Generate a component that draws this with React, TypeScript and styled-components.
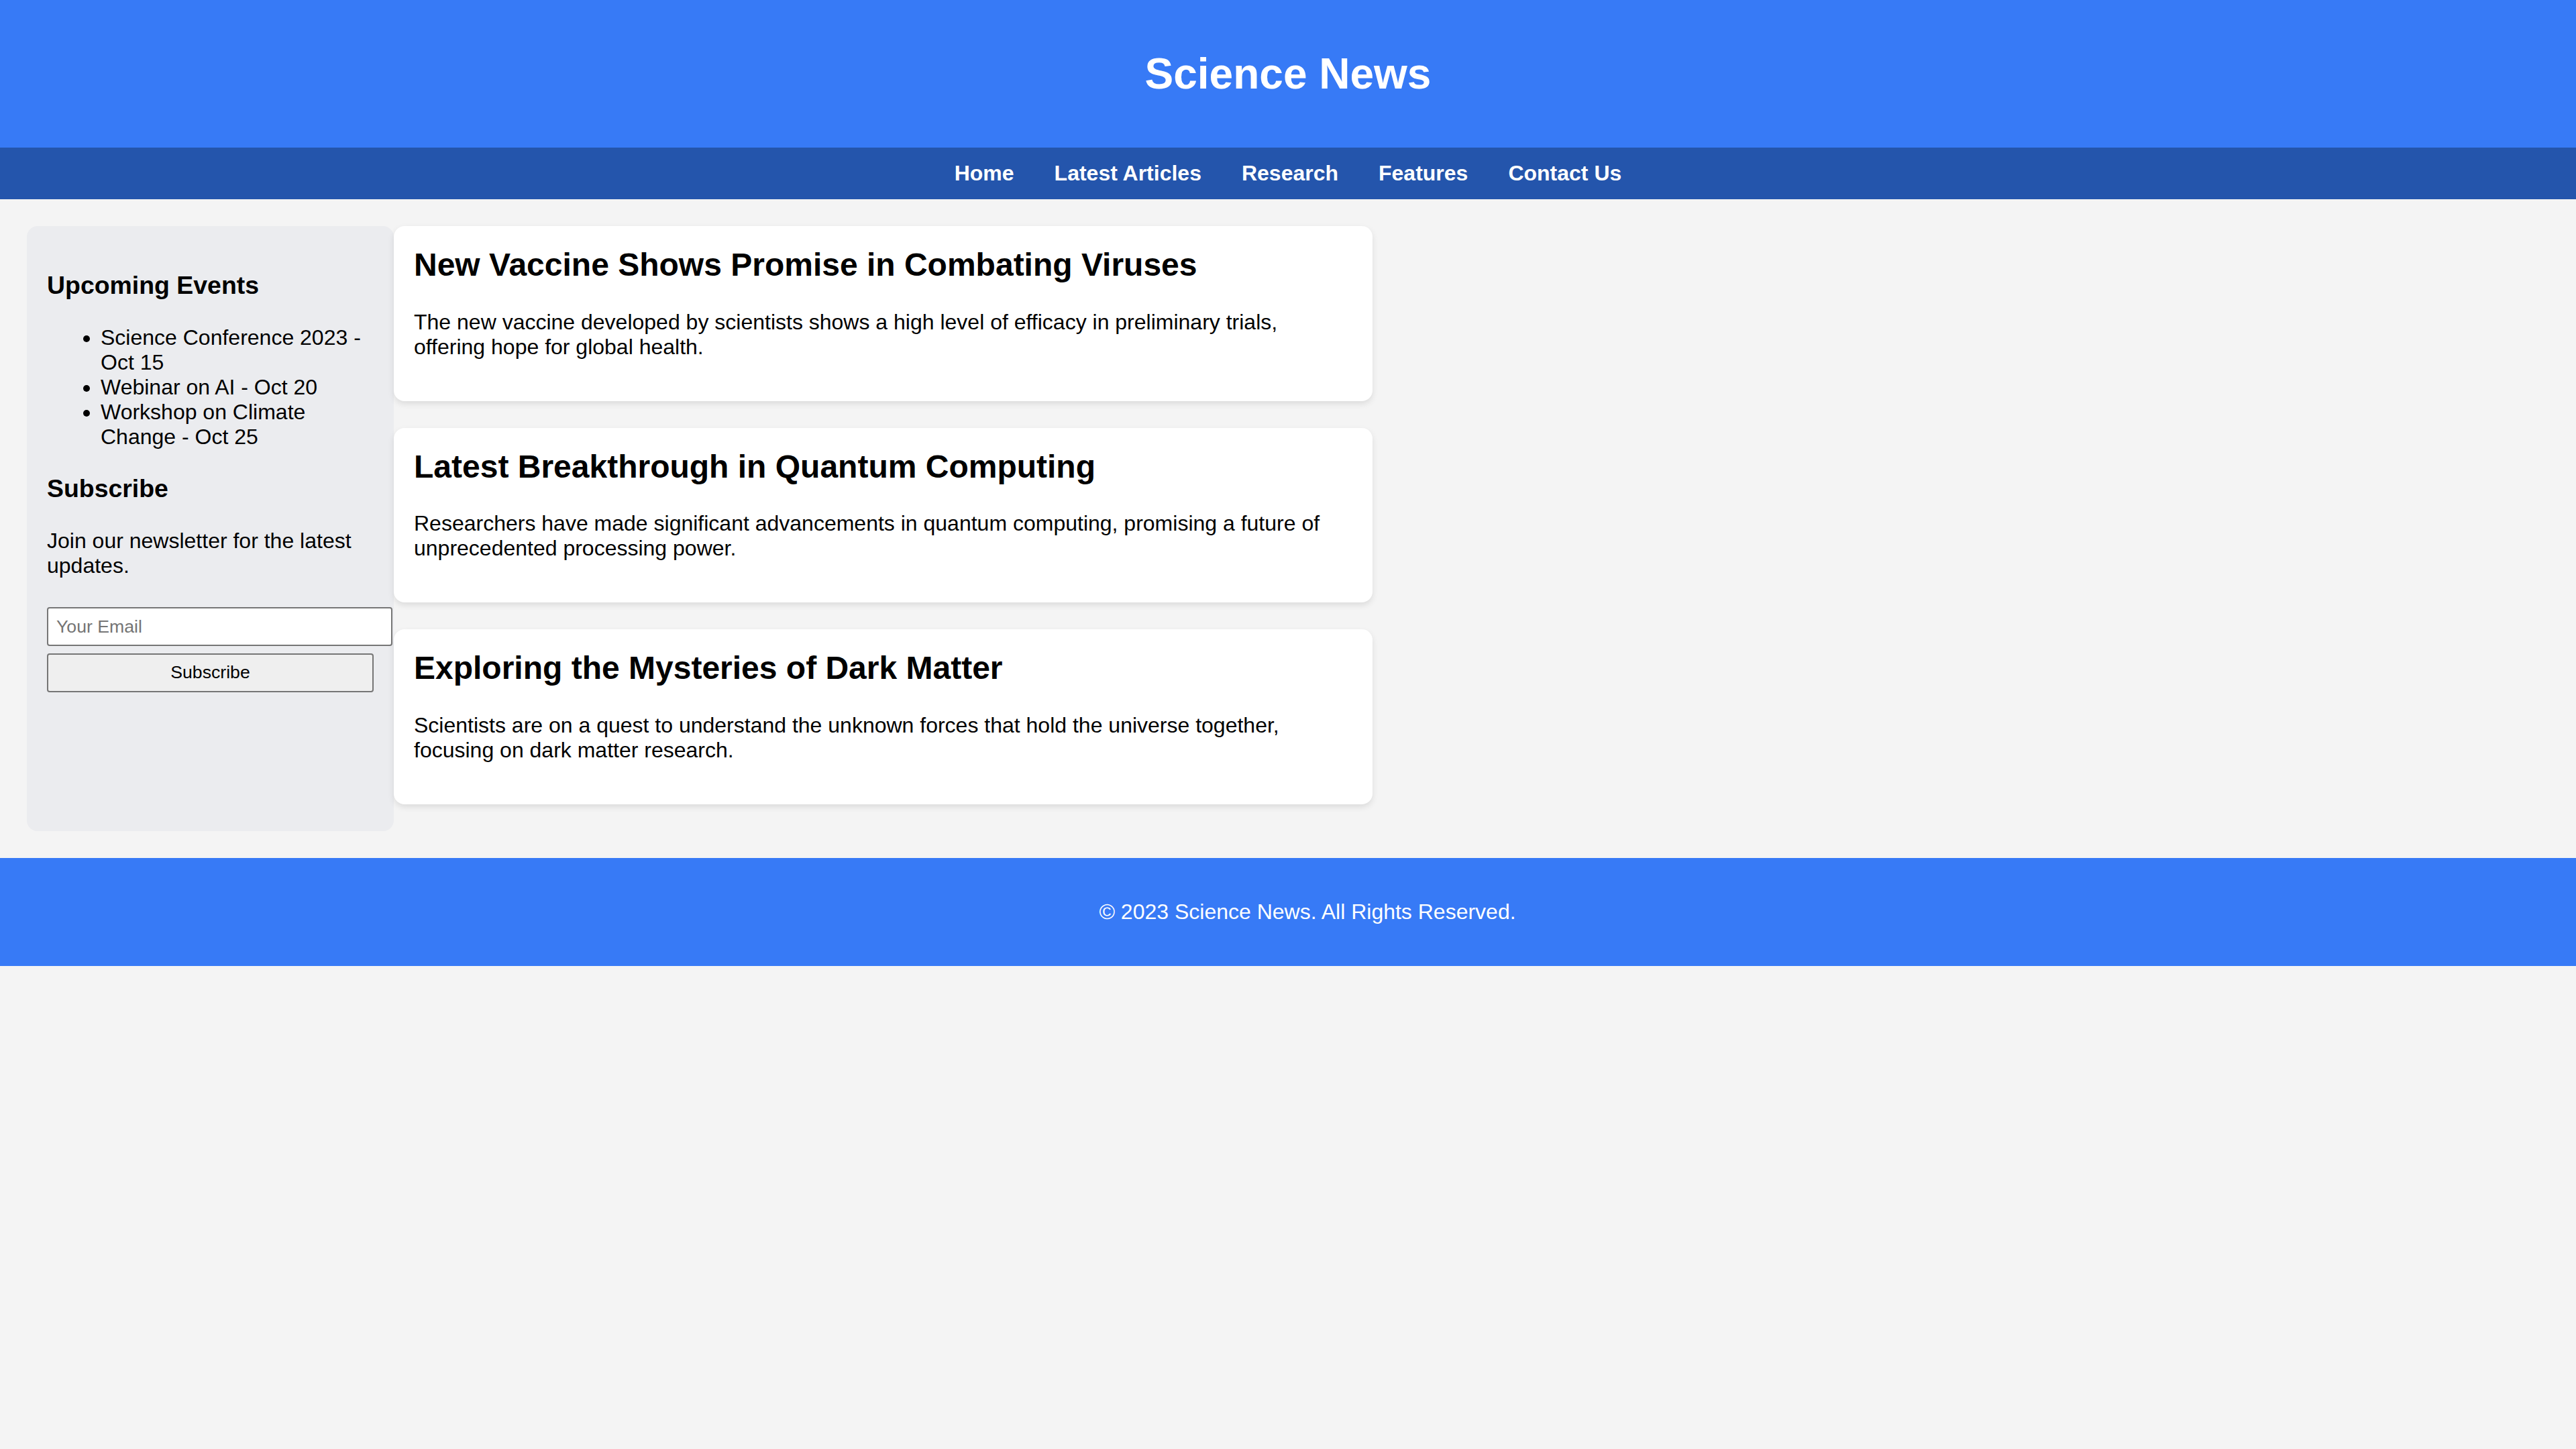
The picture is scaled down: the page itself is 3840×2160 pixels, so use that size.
import React from "react";
import styled, { createGlobalStyle } from "styled-components";

const GlobalStyle = createGlobalStyle`
  html, body {
    margin: 0;
    padding: 0;
    background: #f4f4f4;
    color: #000;
    font-family: "Liberation Sans", Arial, Helvetica, sans-serif;
    font-size: 32px;
  }
  * { font-family: inherit; }
`;

const Header = styled.header`
  background: #377af6;
  color: #fff;
  text-align: center;
  padding: 30px;
`;

const Title = styled.h1`
  margin: 42.88px 0;
  font-size: 64px;
  font-weight: 700;
  line-height: normal;
`;

const Nav = styled.nav`
  background: #2455ac;
  padding: 20px;
  display: flex;
  justify-content: center;
  gap: 60px;
`;

const NavLink = styled.a`
  color: #fff;
  font-weight: 700;
  font-size: 32px;
  text-decoration: none;
  line-height: normal;
`;

const Main = styled.main`
  display: flex;
  align-items: stretch;
  padding: 40px;
`;

const Sidebar = styled.aside`
  flex: 0 0 auto;
  width: 487px;
  padding: 30px;
  background: #ebecef;
  border-radius: 16px;
`;

const SideHeading = styled.h3`
  margin: 37.44px 0;
  font-size: 37.44px;
  font-weight: 700;
  line-height: normal;
`;

const EventList = styled.ul`
  margin: 32px 0;
  padding-left: 80px;
  list-style: disc;
`;

const EventItem = styled.li`
  font-size: 32px;
  line-height: normal;
`;

const SideText = styled.p<{ $after?: number }>`
  margin: 32px 0 ${(p) => p.$after ?? 32}px;
  font-size: 32px;
  line-height: normal;
`;

const SubscribeForm = styled.form`
  display: flex;
  flex-direction: column;
  align-items: flex-start;
  gap: 11px;
  margin: 0;
`;

const EmailInput = styled.input`
  box-sizing: content-box;
  width: 100%;
  height: 30px;
  padding: 12px;
  border: 2px solid #767676;
  border-radius: 4px;
  background: #fff;
  font-size: 26.67px;
  line-height: 30px;
  color: #000;
  outline: none;
  &::placeholder {
    color: #757575;
  }
`;

const SubmitButton = styled.button`
  box-sizing: border-box;
  width: 100%;
  height: 58px;
  padding: 0 12px;
  border: 2px solid #767676;
  border-radius: 4px;
  background: #efefef;
  color: #000;
  font-size: 26.67px;
  line-height: normal;
`;

const Articles = styled.section`
  flex: 0 0 auto;
  width: 1459px;
`;

const Card = styled.article`
  box-sizing: border-box;
  background: #fff;
  border-radius: 16px;
  padding: 30px;
  margin-bottom: 40px;
  box-shadow: 0 4px 10px rgba(0, 0, 0, 0.1);
`;

const CardTitle = styled.h2`
  margin: 0 0 39.84px;
  font-size: 48px;
  font-weight: 700;
  line-height: normal;
`;

const CardText = styled.p`
  margin: 32px 0;
  font-size: 32px;
  line-height: normal;
`;

const Footer = styled.footer`
  background: #377af6;
  color: #fff;
  text-align: center;
  padding: 30px 0 30px 58px;
`;

const FooterText = styled.p`
  margin: 32px 0;
  font-size: 32px;
  line-height: normal;
`;

const navItems = ["Home", "Latest Articles", "Research", "Features", "Contact Us"];

const events = [
  "Science Conference 2023 - Oct 15",
  "Webinar on AI - Oct 20",
  "Workshop on Climate Change - Oct 25",
];

const articles = [
  {
    title: "New Vaccine Shows Promise in Combating Viruses",
    text: "The new vaccine developed by scientists shows a high level of efficacy in preliminary trials, offering hope for global health.",
  },
  {
    title: "Latest Breakthrough in Quantum Computing",
    text: "Researchers have made significant advancements in quantum computing, promising a future of unprecedented processing power.",
  },
  {
    title: "Exploring the Mysteries of Dark Matter",
    text: "Scientists are on a quest to understand the unknown forces that hold the universe together, focusing on dark matter research.",
  },
];

export default function App() {
  return (
    <>
      <GlobalStyle />
      <Header>
        <Title>Science News</Title>
      </Header>
      <Nav>
        {navItems.map((n) => (
          <NavLink key={n} href="#">
            {n}
          </NavLink>
        ))}
      </Nav>
      <Main>
        <Sidebar>
          <SideHeading>Upcoming Events</SideHeading>
          <EventList>
            {events.map((e) => (
              <EventItem key={e}>{e}</EventItem>
            ))}
          </EventList>
          <SideHeading>Subscribe</SideHeading>
          <SideText $after={43}>Join our newsletter for the latest updates.</SideText>
          <SubscribeForm onSubmit={(e) => e.preventDefault()}>
            <EmailInput type="email" placeholder="Your Email" />
            <SubmitButton type="submit">Subscribe</SubmitButton>
          </SubscribeForm>
        </Sidebar>
        <Articles>
          {articles.map((a) => (
            <Card key={a.title}>
              <CardTitle>{a.title}</CardTitle>
              <CardText>{a.text}</CardText>
            </Card>
          ))}
        </Articles>
      </Main>
      <Footer>
        <FooterText>© 2023 Science News. All Rights Reserved.</FooterText>
      </Footer>
    </>
  );
}
